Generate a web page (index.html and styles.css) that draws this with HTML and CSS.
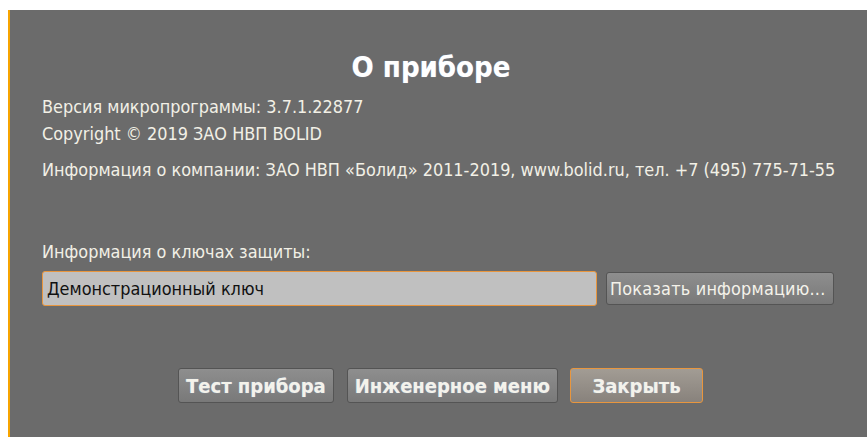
FILE: index.html
```html
<!DOCTYPE html>
<html lang="ru">
<head>
<meta charset="utf-8">
<title>О приборе</title>
<link rel="stylesheet" href="styles.css">
</head>
<body>
<div class="window">
  <h1 class="title">О приборе</h1>
  <div class="info">
    <p class="line">Версия микропрограммы: 3.7.1.22877</p>
    <p class="line">Copyright © 2019 ЗАО НВП BOLID</p>
    <p class="line line-gap">Информация о компании: ЗАО НВП «Болид» 2011-2019, www.bolid.ru, тел. +7 (495) 775-71-55</p>
  </div>
  <div class="keys">
    <p class="line">Информация о ключах защиты:</p>
    <div class="key-row">
      <div class="field">Демонстрационный ключ</div>
      <button class="btn btn-small">Показать информацию...</button>
    </div>
  </div>
  <div class="actions">
    <button class="btn btn-big">Тест прибора</button>
    <button class="btn btn-big">Инженерное меню</button>
    <button class="btn btn-big btn-primary">Закрыть</button>
  </div>
</div>
</body>
</html>
```
FILE: styles.css
```css
html, body {
  margin: 0;
  padding: 0;
  background: #ffffff;
}

body {
  padding: 10px 0 0 8px;
  font-family: "DejaVu Sans Condensed", "DejaVu Sans", sans-serif;
  color: #f2f0e6;
}

.window {
  height: 427px;
  box-sizing: border-box;
  background: #6b6b6b;
  border-left: 2px solid #f7a400;
  padding: 40px 32px 0 32px;
  display: flex;
  flex-direction: column;
}

.title {
  margin: 0;
  padding-right: 15px;
  text-align: center;
  font-size: 29px;
  font-weight: bold;
  line-height: 34px;
  color: #ffffff;
  text-shadow: 0 0 1px rgba(160, 200, 255, 0.6);
}

.info {
  margin-top: 9px;
}

.line {
  margin: 0;
  font-size: 17.9px;
  line-height: 27px;
  white-space: nowrap;
}

.line-gap {
  margin-top: 9px;
}

.keys {
  margin-top: 55px;
}

.key-row {
  display: flex;
  align-items: center;
  gap: 9px;
  margin-top: 6px;
}

.field {
  width: 555px;
  height: 35px;
  box-sizing: border-box;
  background: #c0c0c0;
  border: 1px solid #e8963e;
  border-radius: 3px;
  color: #111111;
  font-size: 17.9px;
  line-height: 33px;
  padding-left: 4px;
}

.btn {
  font-family: "DejaVu Sans Condensed", "DejaVu Sans", sans-serif;
  color: #f4f2ea;
  background: linear-gradient(#8e8e8e, #797979);
  border: 1px solid #545454;
  border-radius: 3px;
  padding: 0;
  cursor: pointer;
  white-space: nowrap;
}

.btn-small {
  width: 228px;
  height: 33px;
  font-size: 17.9px;
  text-align: left;
  padding-left: 3px;
  letter-spacing: 0.2px;
}

.actions {
  display: flex;
  justify-content: center;
  gap: 13px;
  margin-top: 62px;
  padding-left: 4px;
}

.btn-big {
  height: 35px;
  padding: 0 7px;
  font-size: 20px;
  font-weight: bold;
  text-shadow: 0 0 1px rgba(160, 200, 255, 0.7);
}

.btn-primary {
  width: 133px;
  margin-left: -1px;
  background: linear-gradient(#a29c94, #88827c);
  border-color: #e8963e;
}
```
